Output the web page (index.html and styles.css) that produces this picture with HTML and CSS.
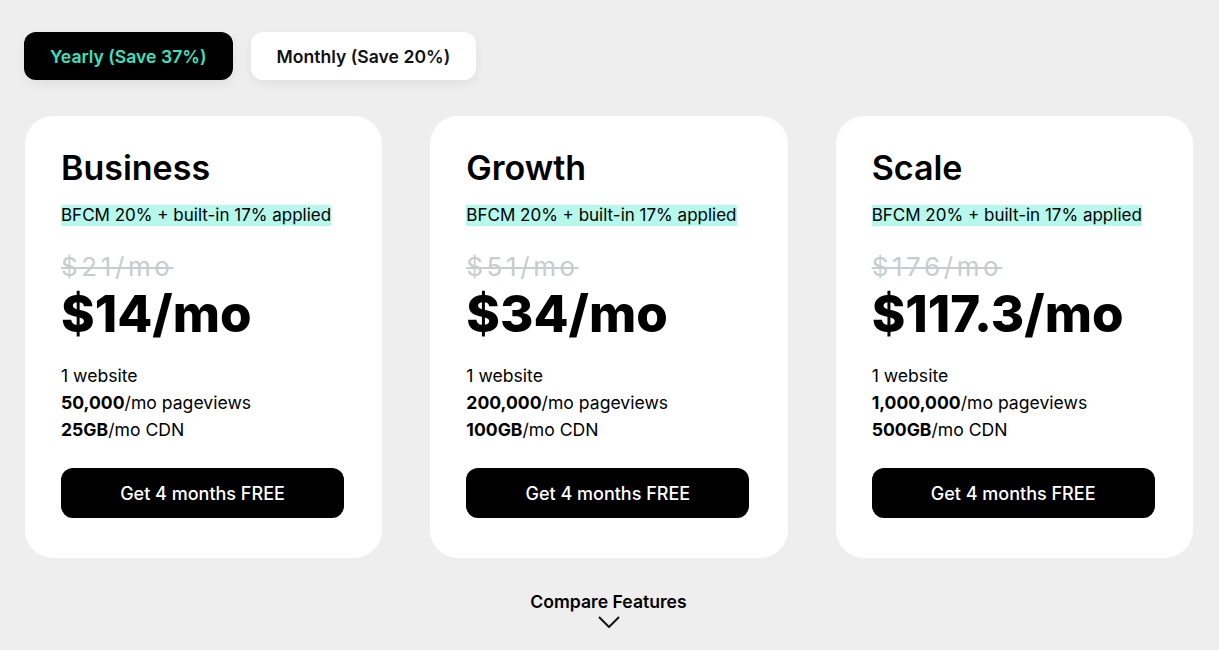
FILE: index.html
```html
<!DOCTYPE html>
<html lang="en">
<head>
    <meta charset="UTF-8">
    <meta name="viewport" content="width=device-width, initial-scale=1.0">
    <title>Pricing</title>
    <link rel="stylesheet" href="styles.css">
</head>
<body>
    <div class="page">
        <div class="billing-toggle">
            <button class="toggle-btn active">Yearly (Save 37%)</button>
            <button class="toggle-btn">Monthly (Save 20%)</button>
        </div>

        <div class="plans">
            <div class="plan-card">
                <h2>Business</h2>
                <span class="deal">BFCM 20% + built-in 17% applied</span>
                <div class="old-price">$21/mo</div>
                <div class="price">$14/mo</div>
                <ul class="features">
                    <li>1 website</li>
                    <li><b>50,000</b>/mo pageviews</li>
                    <li><b>25GB</b>/mo CDN</li>
                </ul>
                <button class="cta">Get 4 months FREE</button>
            </div>

            <div class="plan-card">
                <h2>Growth</h2>
                <span class="deal">BFCM 20% + built-in 17% applied</span>
                <div class="old-price">$51/mo</div>
                <div class="price">$34/mo</div>
                <ul class="features">
                    <li>1 website</li>
                    <li><b>200,000</b>/mo pageviews</li>
                    <li><b>100GB</b>/mo CDN</li>
                </ul>
                <button class="cta">Get 4 months FREE</button>
            </div>

            <div class="plan-card">
                <h2>Scale</h2>
                <span class="deal">BFCM 20% + built-in 17% applied</span>
                <div class="old-price">$176/mo</div>
                <div class="price">$117.3/mo</div>
                <ul class="features">
                    <li>1 website</li>
                    <li><b>1,000,000</b>/mo pageviews</li>
                    <li><b>500GB</b>/mo CDN</li>
                </ul>
                <button class="cta">Get 4 months FREE</button>
            </div>
        </div>

        <div class="compare">
            <span>Compare Features</span>
            <svg width="22" height="12" viewBox="0 0 22 12" fill="none" stroke="#111" stroke-width="2">
                <path d="M1 1l10 10L21 1"/>
            </svg>
        </div>
    </div>
</body>
</html>
```

FILE: styles.css
```css
body {
    margin: 0;
    padding: 0;
    background-color: #eeeeee;
    font-family: Inter, "Noto Sans", sans-serif;
    color: #000;
}

.page {
    padding: 32px 26px 0 24px;
}

.billing-toggle {
    display: flex;
    gap: 18px;
}

.toggle-btn {
    font-family: inherit;
    font-size: 17.6px;
    font-weight: 600;
    height: 48px;
    padding: 0 26px;
    border: none;
    border-radius: 12px;
    background-color: #fff;
    color: #111;
    box-shadow: 0 4px 12px rgba(0, 0, 0, 0.06);
    cursor: pointer;
}

.toggle-btn.active {
    background-color: #000;
    color: #3ee0c0;
}

.plans {
    display: flex;
    gap: 48px;
    margin-top: 36px;
    padding-left: 1px;
}

.plan-card {
    flex: 1;
    background-color: #fff;
    border-radius: 28px;
    padding: 32px 36px 40px;
    display: flex;
    flex-direction: column;
    align-items: flex-start;
}

.plan-card h2 {
    margin: 0;
    font-size: 34px;
    font-weight: 600;
    line-height: 40px;
}

.deal {
    margin-top: 17px;
    background-color: #b6f8eb;
    font-size: 17px;
    line-height: 21px;
}

.old-price {
    margin-top: 26px;
    font-size: 26px;
    line-height: 30px;
    letter-spacing: 3.6px;
    color: #c6cdcc;
    text-decoration: line-through;
    text-decoration-thickness: 2px;
}

.price {
    margin-top: 2px;
    font-size: 51px;
    font-weight: 800;
    line-height: 60px;
}

.features {
    list-style: none;
    margin: 18px 0 0;
    padding: 0;
    font-size: 17.6px;
    line-height: 27px;
}

.cta {
    margin-top: 25px;
    width: 283px;
    height: 50px;
    border: none;
    border-radius: 12px;
    background-color: #000;
    color: #fff;
    font-family: inherit;
    font-size: 18px;
    font-weight: 500;
    cursor: pointer;
}

.compare {
    display: flex;
    flex-direction: column;
    align-items: center;
    gap: 4px;
    margin-top: 33px;
    font-size: 17.6px;
    font-weight: 600;
}
```
